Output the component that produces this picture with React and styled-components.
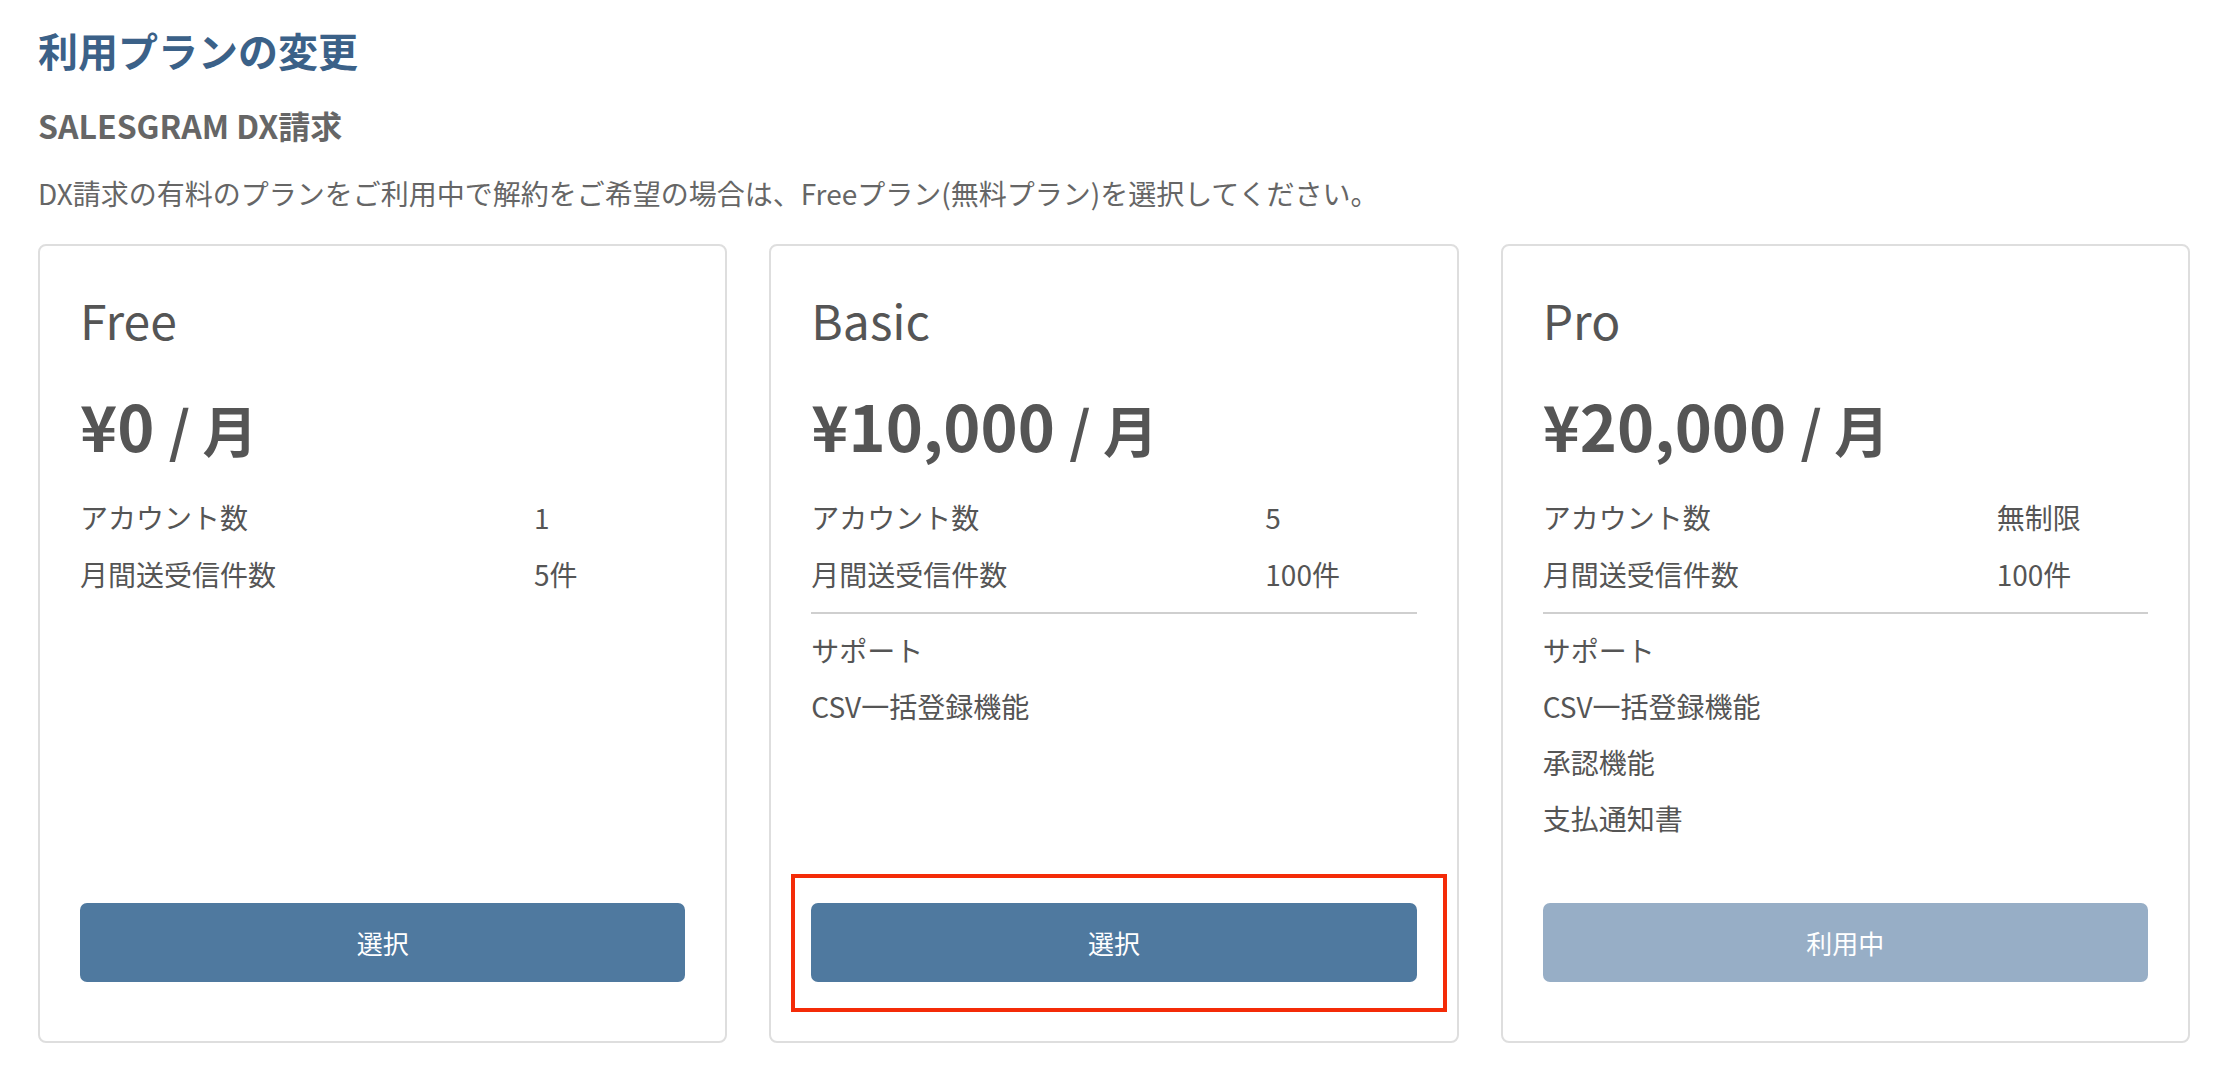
import React from 'react';
import styled, { createGlobalStyle } from 'styled-components';

const plans = [
  {
    name: 'Free',
    price: '¥0',
    specs: [
      ['アカウント数', '1'],
      ['月間送受信件数', '5件'],
    ],
    features: [],
    action: '選択',
  },
  {
    name: 'Basic',
    price: '¥10,000',
    specs: [
      ['アカウント数', '5'],
      ['月間送受信件数', '100件'],
    ],
    features: ['サポート', 'CSV一括登録機能'],
    action: '選択',
    highlighted: true,
  },
  {
    name: 'Pro',
    price: '¥20,000',
    specs: [
      ['アカウント数', '無制限'],
      ['月間送受信件数', '100件'],
    ],
    features: ['サポート', 'CSV一括登録機能', '承認機能', '支払通知書'],
    action: '利用中',
    current: true,
  },
];

const App = () => {
  return (
    <Page>
      <GlobalStyle />
      <Title>利用プランの変更</Title>
      <SubTitle>SALESGRAM DX請求</SubTitle>
      <Description>
        DX請求の有料のプランをご利用中で解約をご希望の場合は、Freeプラン(無料プラン)を選択してください。
      </Description>
      <PlanGrid>
        {plans.map((plan) => (
          <Card key={plan.name}>
            <PlanName>{plan.name}</PlanName>
            <Price>
              {plan.price} <Unit>/ 月</Unit>
            </Price>
            <SpecTable>
              {plan.specs.map(([label, value]) => (
                <React.Fragment key={label}>
                  <SpecCell>{label}</SpecCell>
                  <SpecCell>{value}</SpecCell>
                </React.Fragment>
              ))}
            </SpecTable>
            {plan.features.length > 0 && (
              <>
                <Divider />
                <FeatureList>
                  {plan.features.map((f) => (
                    <Feature key={f}>{f}</Feature>
                  ))}
                </FeatureList>
              </>
            )}
            <ActionArea>
              <PlanButton disabled={plan.current}>{plan.action}</PlanButton>
              {plan.highlighted && <Highlight />}
            </ActionArea>
          </Card>
        ))}
      </PlanGrid>
    </Page>
  );
};

export default App;

// Styled Components
const GlobalStyle = createGlobalStyle`
  body {
    margin: 0;
    background: #fff;
    font-family: "Noto Sans CJK JP", "Noto Sans", sans-serif;
  }
`;

const Page = styled.div`
  padding: 20px 42px 27px 38px;
`;

const Title = styled.h1`
  margin: 0;
  font-size: 40px;
  line-height: 60px;
  font-weight: 700;
  color: #3b6188;
`;

const SubTitle = styled.h2`
  margin: 22px 0 0;
  font-size: 32px;
  line-height: 46px;
  font-weight: 700;
  color: #666;
`;

const Description = styled.p`
  margin: 24px 0 0;
  font-size: 28px;
  line-height: 42px;
  color: #666;
`;

const PlanGrid = styled.div`
  display: grid;
  grid-template-columns: repeat(3, 1fr);
  gap: 42px;
  margin-top: 30px;
`;

const Card = styled.div`
  display: flex;
  flex-direction: column;
  min-height: 799px;
  box-sizing: border-box;
  padding: 44px 40px 59px;
  border: 2px solid #dedede;
  border-radius: 8px;
  color: #555;
`;

const PlanName = styled.div`
  font-size: 48px;
  line-height: 58px;
  font-weight: 400;
`;

const Price = styled.div`
  margin-top: 38px;
  font-size: 63px;
  line-height: 77px;
  font-weight: 700;
`;

const Unit = styled.span`
  font-size: 55px;
`;

const SpecTable = styled.div`
  display: grid;
  grid-template-columns: 3fr 1fr;
  margin-top: 22px;
`;

const SpecCell = styled.div`
  font-size: 28px;
  line-height: 57px;
`;

const Divider = styled.hr`
  margin: 9px 0 8px;
  border: none;
  border-top: 2px solid #cfcfcf;
`;

const FeatureList = styled.div`
  display: flex;
  flex-direction: column;
`;

const Feature = styled.div`
  font-size: 28px;
  line-height: 56px;
`;

const ActionArea = styled.div`
  position: relative;
  margin-top: auto;
`;

const PlanButton = styled.button`
  display: block;
  width: 100%;
  height: 79px;
  border: none;
  border-radius: 7px;
  background: ${(p) => (p.disabled ? '#97aec6' : '#4f799f')};
  color: #fff;
  font-family: inherit;
  font-size: 26px;
  cursor: ${(p) => (p.disabled ? 'default' : 'pointer')};
`;

const Highlight = styled.div`
  position: absolute;
  top: -29px;
  bottom: -30px;
  left: -20px;
  right: -30px;
  border: 4px solid #f42b08;
  pointer-events: none;
`;
